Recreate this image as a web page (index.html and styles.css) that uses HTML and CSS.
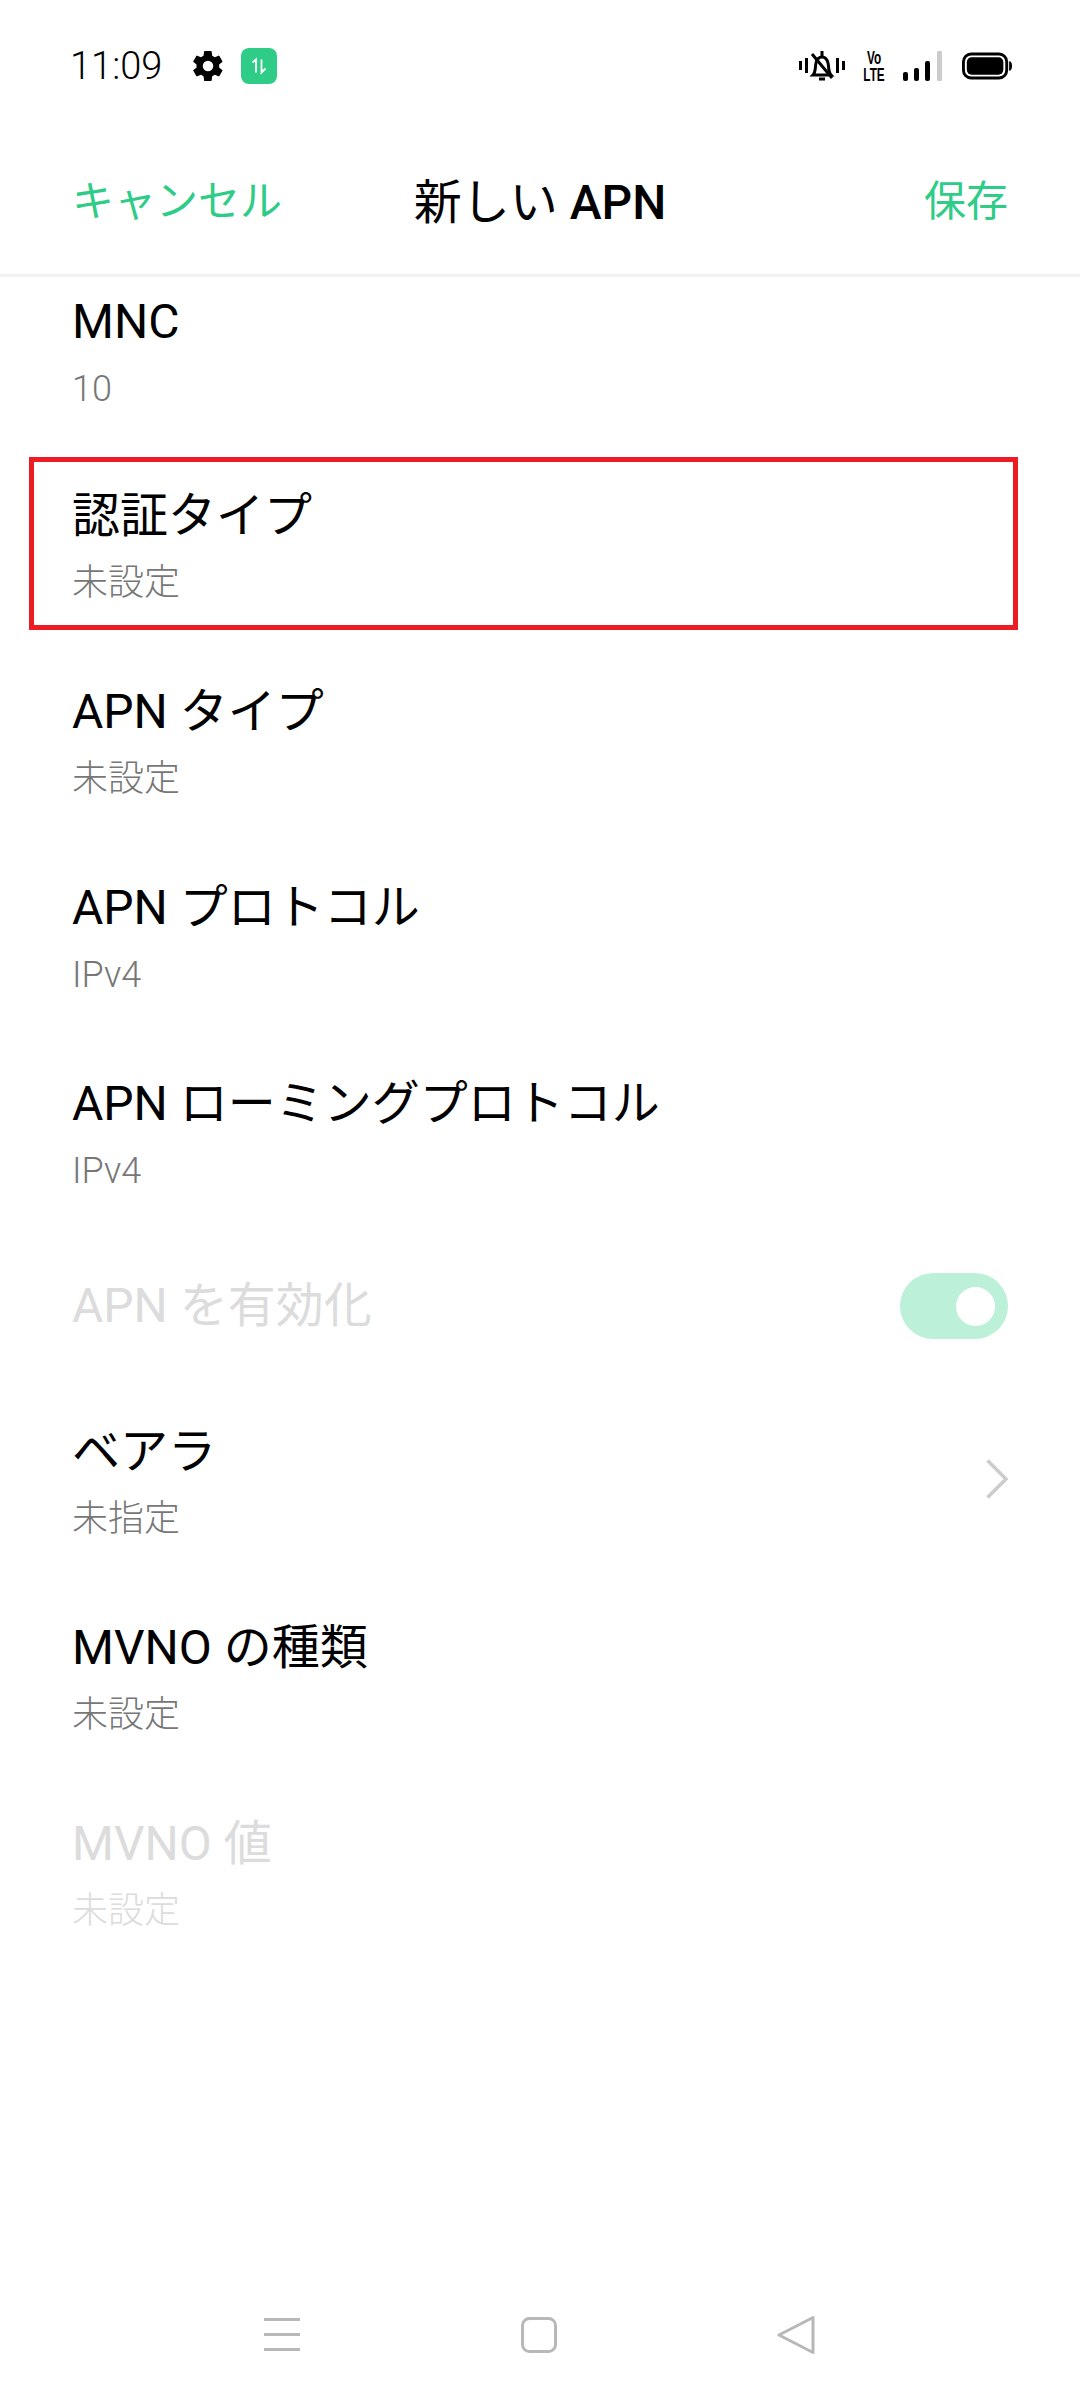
FILE: index.html
```html
<!DOCTYPE html>
<html lang="ja">
<head>
  <meta charset="UTF-8">
  <title>新しい APN</title>
  <meta name="viewport" content="width=device-width, initial-scale=1.0">
  <link rel="stylesheet" href="styles.css">
</head>
<body>

  <!-- Status bar -->
  <div class="status-bar">
    <span class="clock">11:09</span>
    <svg class="gear" width="30" height="30" viewBox="2 2 20 20"><path d="M19.4 13a7.5 7.5 0 0 0 0-2l2.100-1.600a.5.5 0 0 0 .1-.6l-2-3.500a.5.5 0 0 0-.6-.2l-2.500 1a7.300 7.300 0 0 0-1.700-1L14.400 2.400a.5.5 0 0 0-.5-.4h-4a.5.5 0 0 0-.5.4L9 5.100a7.300 7.300 0 0 0-1.700 1l-2.500-1a.5.5 0 0 0-.6.2l-2 3.500a.5.5 0 0 0 .1.6L4.400 11a7.500 7.500 0 0 0 0 2l-2.100 1.600a.5.5 0 0 0-.1.6l2 3.500a.5.5 0 0 0 .6.2l2.500-1a7.300 7.300 0 0 0 1.700 1l.4 2.700a.5.5 0 0 0 .5.4h4a.5.5 0 0 0 .5-.4l.4-2.700a7.300 7.300 0 0 0 1.700-1l2.500 1a.5.5 0 0 0 .6-.2l2-3.500a.5.5 0 0 0-.1-.6zM12 15.500a3.500 3.500 0 1 1 0-7 3.500 3.500 0 0 1 0 7z"/></svg>
    <span class="data-badge">
      <svg width="18" height="18" viewBox="0 0 18 18" fill="none" stroke="#fff" stroke-width="1.800"><path d="M2.500 5.500 6 2.500V15.500M11.500 2.500V15.500L15.500 11.500"/></svg>
    </span>

    <div class="status-right">
      <svg class="bell" width="46" height="32" viewBox="0 0 46 32" fill="none" stroke="#000" stroke-width="3">
        <path d="M1.500 11v9M7.500 8v15M38.500 8v15M44.500 11v9" />
        <path d="M14 25c3-3 2-8 3-12 1-4 3-6 6-6s5 2 6 6c1 4 0 9 3 12z" />
        <path d="M23 1v5M20 29h6M13 4l20 24" />
      </svg>
      <span class="volte">Vo<br>LTE</span>
      <svg class="signal" width="39" height="30" viewBox="0 0 39 30">
        <rect x="0" y="21" width="5" height="9" rx="2"/>
        <rect x="11" y="17" width="5" height="13" rx="2"/>
        <rect x="22" y="10" width="5" height="20" rx="2"/>
        <rect x="34" y="0" width="5" height="30" rx="1" fill="#ccc"/>
      </svg>
      <svg class="battery" width="50" height="28" viewBox="0 0 52 28">
        <rect x="1.500" y="1.500" width="45" height="25" rx="8" fill="none" stroke="#000" stroke-width="3"/>
        <rect x="5" y="5" width="38" height="18" rx="5"/>
        <path d="M49 9c2 0 3 2 3 5s-1 5-3 5z"/>
      </svg>
    </div>
  </div>

  <!-- Header -->
  <div class="top-bar">
    <span class="action">キャンセル</span>
    <span class="page-title">新しい <b>APN</b></span>
    <span class="action action-right">保存</span>
  </div>

  <!-- Settings list -->
  <div class="list">
    <div class="row row-first">
      <div>
        <div class="row-title">MNC</div>
        <div class="row-sub">10</div>
      </div>
    </div>

    <div class="row">
      <div>
        <div class="row-title">認証タイプ</div>
        <div class="row-sub">未設定</div>
      </div>
      <div class="highlight"></div>
    </div>

    <div class="row">
      <div>
        <div class="row-title">APN タイプ</div>
        <div class="row-sub">未設定</div>
      </div>
    </div>

    <div class="row">
      <div>
        <div class="row-title">APN プロトコル</div>
        <div class="row-sub">IPv4</div>
      </div>
    </div>

    <div class="row">
      <div>
        <div class="row-title">APN ローミングプロトコル</div>
        <div class="row-sub">IPv4</div>
      </div>
    </div>

    <div class="row row-single disabled">
      <div class="row-title">APN を有効化</div>
      <div class="toggle"><span class="knob"></span></div>
    </div>

    <div class="row">
      <div>
        <div class="row-title">ベアラ</div>
        <div class="row-sub">未指定</div>
      </div>
      <svg class="chevron" width="22" height="40" viewBox="0 0 22 40" fill="none" stroke="#ccc" stroke-width="3.500"><path d="M1.500 1.500 20 20 1.500 38.500"/></svg>
    </div>

    <div class="row">
      <div>
        <div class="row-title">MVNO の種類</div>
        <div class="row-sub">未設定</div>
      </div>
    </div>

    <div class="row disabled">
      <div>
        <div class="row-title">MVNO 値</div>
        <div class="row-sub">未設定</div>
      </div>
    </div>
  </div>

  <!-- Navigation bar -->
  <div class="nav-bar">
    <svg width="36" height="34" viewBox="0 0 36 34" fill="#b8b8b8">
      <rect y="0" width="36" height="3"/>
      <rect y="15" width="36" height="3"/>
      <rect y="30" width="36" height="3"/>
    </svg>
    <svg width="36" height="36" viewBox="0 0 36 36" fill="none" stroke="#b8b8b8" stroke-width="3">
      <rect x="1.500" y="1.500" width="33" height="33" rx="7"/>
    </svg>
    <svg width="38" height="40" viewBox="0 0 38 40" fill="none" stroke="#b8b8b8" stroke-width="3" stroke-linejoin="round">
      <path d="M36 2.500V37.500L2 20z"/>
    </svg>
  </div>

</body>
</html>
```

FILE: styles.css
```css
html {
  height: 100%;
}

body {
  margin: 0;
  height: 2400px;
  display: flex;
  flex-direction: column;
  background-color: #fff;
  color: #000;
  font-family: Roboto, "Noto Sans CJK JP", sans-serif;
  overflow: hidden;
}

/* status bar */
.status-bar {
  display: flex;
  align-items: center;
  height: 66px;
  padding: 33px 68px 0 70px;
}

.clock {
  font-size: 38px;
  font-weight: 300;
  line-height: 44px;
  width: 123px;
}

.gear {
  margin-right: 18px;
}

.data-badge {
  width: 36px;
  height: 36px;
  border-radius: 8px;
  background-color: #2ecc87;
  display: flex;
  align-items: center;
  justify-content: center;
}

.status-right {
  margin-left: auto;
  display: flex;
  align-items: center;
}

/* bold condensed label, no narrow font is installed */
.volte {
  width: 36px;
  margin: 0 11px;
  font-family: "Liberation Sans", sans-serif;
  font-size: 19px;
  line-height: 17px;
  font-weight: 700;
  text-align: center;
  transform: scaleX(0.62);
}

.signal {
  margin-right: 20px;
}

/* header */
.top-bar {
  display: grid;
  grid-template-columns: 1fr auto 1fr;
  align-items: center;
  height: 178px;
  padding: 22px 72px 0 72px;
  border-bottom: 3px solid #f1f1f1;
  box-sizing: border-box;
}

.action {
  color: #2ecc87;
  font-size: 42px;
}

.action-right {
  text-align: right;
}

.page-title {
  font-size: 48px;
}

.page-title b {
  font-weight: 500;
}

/* list */
.list {
  flex: 1;
  overflow: hidden;
}

.row {
  position: relative;
  display: flex;
  align-items: center;
  justify-content: space-between;
  box-sizing: border-box;
  height: 196px;
  padding: 0 72px 11px 72px;
}

.row-first {
  height: 176px;
  padding-bottom: 27px;
}

.row-single {
  height: 152px;
  padding-bottom: 14px;
}

.row-title {
  font-size: 48px;
  line-height: 64px;
}

.row-sub {
  margin-top: 11px;
  font-size: 36px;
  font-weight: 300;
  line-height: 48px;
  color: #777;
}

.disabled .row-title,
.disabled .row-sub {
  color: #dcdcdc;
}

/* red annotation frame */
.highlight {
  position: absolute;
  top: 4px;
  left: 29px;
  width: 989px;
  height: 173px;
  border: 5px solid #ed1c24;
  box-sizing: border-box;
}

.toggle {
  width: 108px;
  height: 66px;
  border-radius: 33px;
  background-color: #bdf0d8;
  display: flex;
  align-items: center;
  justify-content: flex-end;
  padding-right: 13px;
  box-sizing: border-box;
}

.knob {
  width: 39px;
  height: 39px;
  border-radius: 50%;
  background-color: #fff;
}

.chevron {
  margin-bottom: 6px;
}

/* nav bar */
.nav-bar {
  display: flex;
  align-items: center;
  justify-content: space-between;
  height: 86px;
  padding: 0 265px 44px 264px;
  box-sizing: border-box;
}
```
